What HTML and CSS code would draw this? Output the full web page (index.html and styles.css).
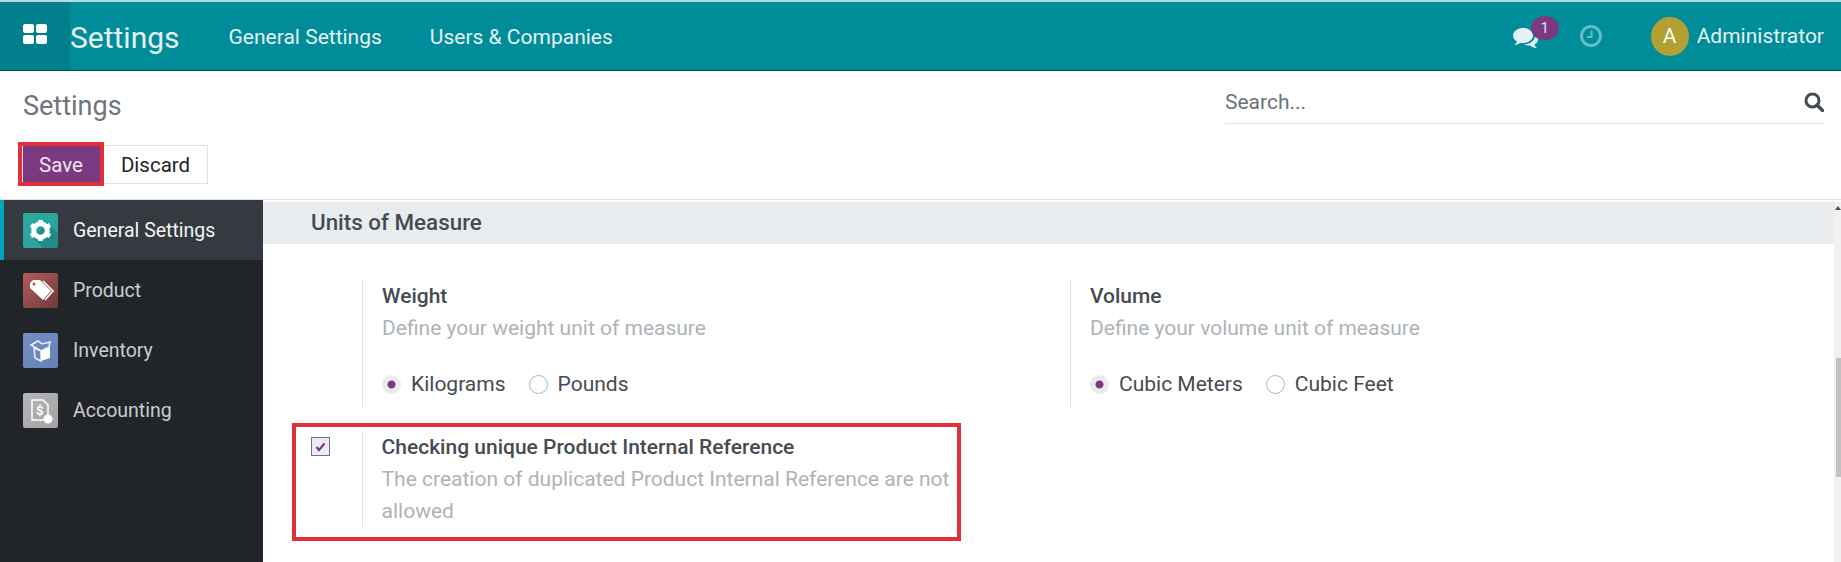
FILE: index.html
```html
<!DOCTYPE html>
<html lang="en">
<head>
  <meta charset="UTF-8" />
  <title>Settings</title>
  <link rel="stylesheet" href="styles.css">
</head>
<body>

  <header class="navbar">
    <a class="apps-btn">
      <svg width="24" height="20" viewBox="0 0 24 20"><rect width="11" height="9" rx="2" fill="#fff"/><rect x="13" width="11" height="9" rx="2" fill="#fff"/><rect y="11" width="11" height="9" rx="2" fill="#fff"/><rect x="13" y="11" width="11" height="9" rx="2" fill="#fff"/></svg>
    </a>
    <span class="brand">Settings</span>
    <nav class="nav-links">
      <a>General Settings</a>
      <a>Users &amp; Companies</a>
    </nav>
    <div class="nav-right">
      <div class="chat">
        <svg width="26" height="22" viewBox="0 0 26 22"><path d="M10 1C4.500 1 0 4.500 0 8.500c0 2.500 1.500 4.500 4 6-.5 1.500-1.500 2.500-3 3.500 3 0 5-1 6.500-2.200.8.100 1.600.200 2.500.200 5.500 0 10-3.500 10-7.500S15.500 1 10 1z" fill="#e2f3f5"/><path d="M22 10c-1 4-5 7-11 7.500 2 1 4 1.300 6 1 1.500 1.200 4 2.500 7 2.500-1.200-1-2-2-2.500-3.500 2-1 3.500-2.800 3.500-5 0-1-.8-2-3-2.500z" fill="#e2f3f5"/></svg>
        <span class="badge">1</span>
      </div>
      <svg class="clock" width="22" height="22" viewBox="0 0 22 22"><circle cx="11" cy="11" r="9.500" fill="none" stroke="#66bdc7" stroke-width="3"/><path d="M11.500 5.500v6.500H7" fill="none" stroke="#66bdc7" stroke-width="2"/></svg>
      <span class="avatar">A</span>
      <span class="user-name">Administrator</span>
    </div>
  </header>

  <div class="control-panel">
    <div class="cp-left">
      <h1>Settings</h1>
      <div class="cp-buttons">
        <button class="btn-save">Save</button>
        <button class="btn-discard">Discard</button>
      </div>
    </div>
    <div class="search">
      <span>Search...</span>
      <svg width="20" height="20" viewBox="0 0 20 20"><circle cx="8.500" cy="8.500" r="6.500" fill="none" stroke="#444b52" stroke-width="3"/><path d="M13 13l5.500 5.500" stroke="#444b52" stroke-width="3.500" stroke-linecap="round"/></svg>
    </div>
  </div>

  <div class="main">
    <aside class="sidebar">
      <a class="side-item active">
        <span class="side-icon icon-general">
          <svg width="35" height="35" viewBox="0 0 35 35"><path d="M24 9l11 11v15H20L10 25z" fill="rgba(0,0,0,.13)"/><circle cx="17.500" cy="17.500" r="6.800" fill="none" stroke="#fff" stroke-width="5"/><path d="M17.500 7v4M17.500 24v4M8 12l3.500 2M23.500 21l3.500 2M27 12l-3.500 2M11.500 21L8 23" stroke="#fff" stroke-width="4.500"/></svg>
        </span>
        General Settings
      </a>
      <a class="side-item">
        <span class="side-icon icon-product">
          <svg width="35" height="35" viewBox="0 0 35 35"><path d="M7 10l3-3h7l11 11-8 9L7 15z" fill="#fff"/><path d="M20 8l10 10-8 9" fill="none" stroke="#fff" stroke-width="1.500"/><circle cx="11" cy="11" r="1.500" fill="#a85555"/></svg>
        </span>
        Product
      </a>
      <a class="side-item">
        <span class="side-icon icon-inventory">
          <svg width="35" height="35" viewBox="0 0 35 35"><path d="M11 15l7 3v10l-6-3z" fill="none" stroke="#eef1f8" stroke-width="1.500"/><path d="M18 18l9-4v11l-9 3z" fill="#fff"/><path d="M8 12l7-4 4 3 8-2-1 5-8 4z" fill="none" stroke="#eef1f8" stroke-width="1.500"/></svg>
        </span>
        Inventory
      </a>
      <a class="side-item">
        <span class="side-icon icon-accounting">
          <svg width="35" height="35" viewBox="0 0 35 35"><path d="M9 7h11l5 5v15H9z" fill="none" stroke="#fff" stroke-width="1.500"/><text x="13" y="22" class="icon-dollar">$</text><circle cx="25" cy="26" r="4.500" fill="#fff"/></svg>
        </span>
        Accounting
      </a>
    </aside>

    <section class="content">
      <h2 class="section-title">Units of Measure</h2>

      <div class="settings-row">
        <div class="setting">
          <div class="setting-body">
            <div class="setting-label">Weight</div>
            <div class="setting-help">Define your weight unit of measure</div>
            <div class="radios">
              <span class="radio checked"></span><span class="radio-label">Kilograms</span>
              <span class="radio"></span><span class="radio-label">Pounds</span>
            </div>
          </div>
        </div>
        <div class="setting">
          <div class="setting-body">
            <div class="setting-label">Volume</div>
            <div class="setting-help">Define your volume unit of measure</div>
            <div class="radios">
              <span class="radio checked"></span><span class="radio-label">Cubic Meters</span>
              <span class="radio"></span><span class="radio-label">Cubic Feet</span>
            </div>
          </div>
        </div>
      </div>

      <div class="highlight-box">
        <span class="checkbox">
          <svg width="11" height="10" viewBox="0 0 11 10"><path d="M1.500 5l2.500 3 5.500-6.500" fill="none" stroke="#7b3a80" stroke-width="2.200"/></svg>
        </span>
        <div class="setting-body">
          <div class="setting-label">Checking unique Product Internal Reference</div>
          <div class="setting-help">The creation of duplicated Product Internal Reference are not allowed</div>
        </div>
      </div>

      <div class="scrollbar"><div class="scroll-up"></div><div class="scroll-thumb"></div></div>
    </section>
  </div>

</body>
</html>
```
FILE: styles.css
```css
body {
  font-family: Roboto, sans-serif;
  background-color: #fff;
  margin: 0;
  padding: 0;
  height: 562px;
  overflow: hidden;
  color: #454b52;
  display: flex;
  flex-direction: column;
}

.navbar {
  display: flex;
  align-items: center;
  height: 68px;
  flex-shrink: 0;
  background-color: #018c9a;
  border-top: 2px solid #b5dbe0;
  border-bottom: 1px solid #0b4a55;
  color: #e2f3f5;
  font-size: 21px;
}

.apps-btn {
  width: 70px;
  height: 100%;
  background-color: #017f8c;
  display: flex;
  align-items: center;
  padding-left: 23px;
  box-sizing: border-box;
  padding-bottom: 4px;
}

.brand {
  font-size: 30px;
  padding-top: 2px;
}

.nav-links {
  display: flex;
  gap: 48px;
  margin-left: 49px;
  padding-top: 2px;
}

.nav-right {
  display: flex;
  align-items: center;
  margin-left: auto;
  margin-right: 17px;
}

.chat {
  position: relative;
  display: flex;
  width: 26px;
  margin-top: 4px;
}

.badge {
  position: absolute;
  left: 18px;
  top: -11px;
  width: 28px;
  height: 24px;
  border-radius: 50%;
  background-color: #7b3a80;
  color: #e9dcec;
  font-size: 15px;
  line-height: 24px;
  text-align: center;
}

.clock {
  margin-left: 41px;
}

.avatar {
  width: 38px;
  height: 39px;
  border-radius: 50%;
  background-color: #b3a032;
  color: #fff;
  text-align: center;
  line-height: 39px;
  margin-left: 49px;
}

.user-name {
  margin-left: 8px;
}

.control-panel {
  display: flex;
  justify-content: space-between;
  height: 129px;
  flex-shrink: 0;
  border-bottom: 1px solid #dcdfe2;
  box-sizing: border-box;
}

.cp-left {
  padding-left: 18px;
}

h1 {
  font-size: 27px;
  font-weight: 400;
  color: #6f757b;
  margin: 18px 0 0 5px;
  line-height: 34px;
}

.cp-buttons {
  display: flex;
  align-items: center;
  margin-top: 19px;
}

button {
  font-family: Roboto, sans-serif;
  font-size: 20.500px;
  padding: 2px 0 0;
}

.btn-save {
  width: 86px;
  height: 44px;
  background-color: #7b3a80;
  color: #f0e6f1;
  border: 4px solid #e0303a;
  box-shadow: inset 1px 0 0 #e8d5ea;
}

.btn-discard {
  width: 104px;
  height: 39px;
  background-color: #fff;
  color: #212529;
  border: 1px solid #dee2e6;
  border-left: none;
}

.search {
  display: flex;
  align-items: center;
  justify-content: space-between;
  width: 599px;
  height: 53px;
  padding-top: 10px;
  box-sizing: border-box;
  margin-right: 17px;
  border-bottom: 1px solid #dee2e6;
  font-size: 21px;
  color: #6c7278;
}

.main {
  display: flex;
  flex: 1;
  min-height: 0;
}

.sidebar {
  width: 263px;
  flex-shrink: 0;
  background-color: #212529;
  color: #c9ccd0;
  font-size: 19.500px;
}

.side-item {
  display: flex;
  align-items: center;
  gap: 15px;
  height: 60px;
  padding-left: 23px;
  box-sizing: border-box;
}

.side-item.active {
  background-color: #343a40;
  border-left: 4px solid #00a5b8;
  padding-left: 19px;
  color: #f3f4f5;
}

.side-icon {
  width: 35px;
  height: 35px;
  border-radius: 2px;
  display: flex;
}

.icon-general {
  background: linear-gradient(135deg, #2daaa2, #26a09b);
}

.icon-product {
  background: linear-gradient(135deg, #b45c5c, #6e3a3a);
}

.icon-inventory {
  background: linear-gradient(135deg, #7290c6, #6482b8);
}

.icon-accounting {
  background: linear-gradient(135deg, #b6b6b6, #a3a3a3);
}

.icon-dollar {
  font-size: 13px;
  font-weight: 700;
  fill: #fff;
}

.content {
  position: relative;
  flex: 1;
  padding-top: 2px;
  font-size: 21px;
}

.section-title {
  height: 42px;
  margin: 0 7px 0 0;
  padding-left: 48px;
  background-color: #e9ecef;
  font-size: 22.400px;
  font-weight: 500;
  line-height: 40px;
}

.settings-row {
  display: flex;
  margin-top: 36px;
}

.setting {
  width: 708px;
  padding-left: 99px;
  box-sizing: border-box;
}

.setting-body {
  border-left: 1px solid #dee2e6;
  padding-left: 19px;
  line-height: 32px;
}

.setting-label {
  font-weight: 500;
}

.setting-help {
  color: #adb3b8;
}

.radios {
  display: flex;
  align-items: center;
  margin-top: 21px;
  height: 42px;
  padding-bottom: 4px;
  box-sizing: border-box;
}

.radio {
  width: 19px;
  height: 19px;
  border: 1px solid #adb5bd;
  border-radius: 50%;
  box-sizing: border-box;
  margin-right: 10px;
}

.radio.checked {
  border: none;
  background: radial-gradient(circle, #7b3a80 0 3.500px, #e9ecef 4.500px);
}

.radio-label {
  margin-right: 23px;
}

.highlight-box {
  display: flex;
  align-items: flex-start;
  width: 669px;
  height: 118px;
  margin: 16px 0 0 29px;
  padding: 4px 0 0 15px;
  border: 4px solid #e0303a;
  box-sizing: border-box;
}

.checkbox {
  width: 19px;
  height: 19px;
  margin-top: 6px;
  margin-right: 32px;
  border: 1px solid #6c757d;
  background-color: #eceaf3;
  box-sizing: border-box;
  display: flex;
  align-items: center;
  justify-content: center;
}

.highlight-box .setting-body {
  width: 590px;
  height: 96px;
}

.scrollbar {
  position: absolute;
  right: 0;
  top: 2px;
  bottom: 0;
  width: 7px;
  background-color: #f1f1f1;
}

.scroll-up {
  margin: 4px auto 0;
  width: 0;
  border-left: 3px solid transparent;
  border-right: 3px solid transparent;
  border-bottom: 4px solid #505050;
}

.scroll-thumb {
  position: absolute;
  top: 156px;
  left: 2px;
  right: 0;
  height: 119px;
  background-color: #c1c1c1;
}
```
